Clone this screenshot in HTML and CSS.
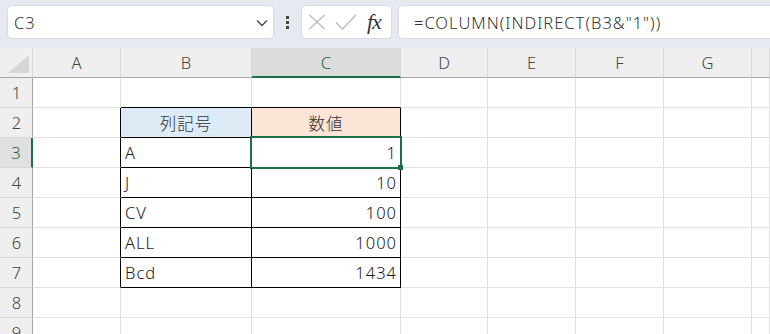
FILE: index.html
```html
<!DOCTYPE html>
<html lang="ja">
<head>
  <meta charset="UTF-8">
  <title>Excel - COLUMN INDIRECT</title>
  <link rel="stylesheet" href="styles.css">
</head>
<body>
  <!-- 数式バー -->
  <div class="toolbar">
    <div class="namebox">
      <span>C3</span>
      <svg class="chev" width="12" height="8" viewBox="0 0 12 8"><path d="M1 1.5 L6 6.5 L11 1.5" fill="none" stroke="#444" stroke-width="1.3"/></svg>
    </div>
    <div class="dots"><i></i><i></i><i></i></div>
    <div class="fxbox">
      <svg width="18" height="16" viewBox="0 0 18 16"><path d="M1.5 1 L16.5 15 M16.5 1 L1.5 15" stroke="#bdbdbd" stroke-width="1.4" fill="none"/></svg>
      <svg width="22" height="16" viewBox="0 0 22 16"><path d="M1 8.5 L7.5 15 L21 1" stroke="#bdbdbd" stroke-width="1.4" fill="none"/></svg>
      <span class="fx">fx</span>
    </div>
    <div class="formula">=COLUMN(INDIRECT(B3&amp;"1"))</div>
  </div>

  <!-- シート -->
  <div class="sheet">
    <div class="corner"><span class="tri"></span></div>
    <div class="colhead">A</div>
    <div class="colhead">B</div>
    <div class="colhead sel">C</div>
    <div class="colhead">D</div>
    <div class="colhead">E</div>
    <div class="colhead">F</div>
    <div class="colhead">G</div>
    <div class="colhead"></div>

    <div class="rowhead">1</div>
    <div class="cell"></div><div class="cell top"></div><div class="cell top"></div>
    <div class="cell"></div><div class="cell"></div><div class="cell"></div><div class="cell"></div><div class="cell"></div>

    <div class="rowhead">2</div>
    <div class="cell left"></div>
    <div class="cell tb head-b">列記号</div>
    <div class="cell tb head-c">数値</div>
    <div class="cell"></div><div class="cell"></div><div class="cell"></div><div class="cell"></div><div class="cell"></div>

    <div class="rowhead sel">3</div>
    <div class="cell left"></div>
    <div class="cell tb">A</div>
    <div class="cell tb num active">1</div>
    <div class="cell"></div><div class="cell"></div><div class="cell"></div><div class="cell"></div><div class="cell"></div>

    <div class="rowhead">4</div>
    <div class="cell left"></div>
    <div class="cell tb">J</div>
    <div class="cell tb num">10</div>
    <div class="cell"></div><div class="cell"></div><div class="cell"></div><div class="cell"></div><div class="cell"></div>

    <div class="rowhead">5</div>
    <div class="cell left"></div>
    <div class="cell tb">CV</div>
    <div class="cell tb num">100</div>
    <div class="cell"></div><div class="cell"></div><div class="cell"></div><div class="cell"></div><div class="cell"></div>

    <div class="rowhead">6</div>
    <div class="cell left"></div>
    <div class="cell tb">ALL</div>
    <div class="cell tb num">1000</div>
    <div class="cell"></div><div class="cell"></div><div class="cell"></div><div class="cell"></div><div class="cell"></div>

    <div class="rowhead">7</div>
    <div class="cell left"></div>
    <div class="cell tb">Bcd</div>
    <div class="cell tb num">1434</div>
    <div class="cell"></div><div class="cell"></div><div class="cell"></div><div class="cell"></div><div class="cell"></div>

    <div class="rowhead">8</div>
    <div class="cell"></div><div class="cell"></div><div class="cell"></div>
    <div class="cell"></div><div class="cell"></div><div class="cell"></div><div class="cell"></div><div class="cell"></div>

    <div class="rowhead">9</div>
    <div class="cell"></div><div class="cell"></div><div class="cell"></div>
    <div class="cell"></div><div class="cell"></div><div class="cell"></div><div class="cell"></div><div class="cell"></div>
  </div>
</body>
</html>
```

FILE: styles.css
```css
/* ページ全体 */
body {
  margin: 0;
  width: 770px;
  height: 334px;
  overflow: hidden;
  background: #ffffff;
  font-family: "Noto Sans", "Noto Sans CJK JP", sans-serif;
  font-weight: 300;
  color: #222;
}

/* 数式バー */
.toolbar {
  height: 48px;
  box-sizing: border-box;
  background: #e6e9ef;
  display: flex;
  align-items: flex-start;
  padding: 5px 0 0 7px;
  white-space: nowrap;
}

.namebox {
  width: 267px;
  height: 34px;
  box-sizing: border-box;
  background: #fff;
  border: 1px solid #d9dce2;
  border-radius: 5px;
  display: flex;
  align-items: center;
  justify-content: space-between;
  padding: 0 5px 0 6px;
  font-size: 16.5px;
  letter-spacing: 1px;
  color: #333;
}

.chev {
  margin-top: 2px;
}

.dots {
  width: 27px;
  height: 34px;
  display: flex;
  flex-direction: column;
  align-items: center;
  justify-content: center;
  gap: 2px;
}

.dots i {
  width: 3px;
  height: 3px;
  background: #444;
}

.fxbox {
  width: 91px;
  height: 34px;
  box-sizing: border-box;
  background: #fff;
  border: 1px solid #d9dce2;
  border-radius: 5px;
  display: flex;
  align-items: center;
  padding: 0 0 0 6px;
  gap: 9px;
  flex-shrink: 0;
}

.fx {
  font-family: "Liberation Serif", "DejaVu Serif", serif;
  font-style: italic;
  font-size: 22px;
  font-weight: 400;
  color: #333;
  margin-left: 1px;
  letter-spacing: -1px;
}

.formula {
  margin-left: 6px;
  flex: 1;
  height: 34px;
  box-sizing: border-box;
  background: #fff;
  border: 1px solid #d9dce2;
  border-radius: 5px 0 0 5px;
  border-right: none;
  padding: 0 0 0 15px;
  display: flex;
  align-items: center;
  font-size: 16.5px;
  letter-spacing: 1px;
  color: #333;
}

/* シートのグリッド */
.sheet {
  display: grid;
  grid-template-columns: 33px 88px 131px 149px 87px 88px 88px 88px 1fr;
  grid-template-rows: 30px;
  grid-auto-rows: 30px;
  font-size: 16.5px;
}

.sheet > div {
  box-sizing: border-box;
  border-right: 1px solid #e1e1e1;
  border-bottom: 1px solid #e1e1e1;
  display: flex;
  align-items: center;
  position: relative;
}

.corner {
  background: #efefef;
  border-bottom-color: #a5a5a5 !important;
  border-right-color: #d8d8d8 !important;
}

.tri {
  position: absolute;
  left: 8px;
  bottom: 4px;
  width: 0;
  height: 0;
  border-left: 21px solid transparent;
  border-bottom: 18px solid #d6d6d6;
}

.colhead {
  background: #efefef;
  justify-content: center;
  color: #444;
  border-right-color: #d8d8d8 !important;
  border-bottom-color: #a5a5a5 !important;
}

.colhead.sel {
  background: #dcdcdc;
  color: #1d6b3e;
  border-bottom: 2px solid #1e7145 !important;
}

.rowhead {
  background: #efefef;
  justify-content: center;
  color: #444;
  border-right-color: #a5a5a5 !important;
  border-bottom-color: #d8d8d8 !important;
  padding-left: 1px;
}

.rowhead.sel {
  background: #e0e0e0;
  color: #1d6b3e;
  border-right: 2px solid #1e7145 !important;
}

/* 表 */
.cell.top {
  border-bottom-color: #000;
}

.cell.left {
  border-right-color: #000;
}

.cell.tb {
  border-right-color: #000;
  border-bottom-color: #000;
  padding: 0 4px;
  letter-spacing: 1px;
  color: #1a1a1a;
}

.cell.num {
  justify-content: flex-end;
  padding-right: 3px;
}

.head-b {
  background: #ddebf7;
  justify-content: center;
  color: #333 !important;
}

.head-c {
  background: #fce4d6;
  justify-content: center;
  color: #333 !important;
}

.active::after {
  content: "";
  position: absolute;
  left: -2px;
  top: -2px;
  right: -2px;
  bottom: -2px;
  border: 2px solid #1e7145;
}

.active::before {
  content: "";
  position: absolute;
  right: -3px;
  bottom: -3px;
  width: 5px;
  height: 5px;
  background: #1e7145;
  z-index: 2;
}
```
